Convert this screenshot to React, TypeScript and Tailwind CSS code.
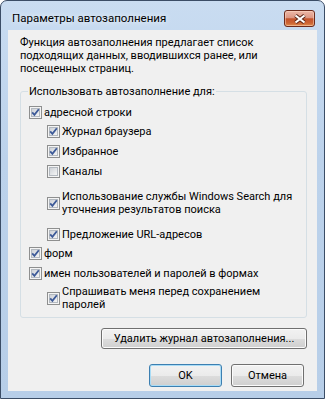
import { useId } from 'react';

function CheckBox({ checked }: { checked: boolean }) {
  const id = useId();
  return (
    <svg width="13" height="13" viewBox="0 0 13 13" className="shrink-0">
      <defs>
        <linearGradient id={`g${id}`} x1="0" y1="0" x2="1" y2="1">
          <stop offset="0" stopColor="#cbcfd5" />
          <stop offset="1" stopColor="#f7f7f7" />
        </linearGradient>
      </defs>
      <rect x="0.5" y="0.5" width="12" height="12" fill="#f4f4f4" stroke="#8e8f8f" />
      <rect x="2.5" y="2.5" width="8" height="8" fill={`url(#g${id})`} stroke="#b3b9c0" />
      {checked && (
        <path d="M3.2 6.4 L5.4 8.9 L9.8 3.2" fill="none" stroke="#3d5a98" strokeWidth="1.8" />
      )}
    </svg>
  );
}

function Option({ label, checked = true, indent = false, className = '' }: {
  label: React.ReactNode;
  checked?: boolean;
  indent?: boolean;
  className?: string;
}) {
  return (
    <div className={`flex items-center gap-[2px] ${indent ? 'ml-[18px]' : ''} ${className}`}>
      <CheckBox checked={checked} />
      <span className="leading-[13px] whitespace-nowrap">{label}</span>
    </div>
  );
}

function CloseButton() {
  return (
    <div className="mt-[9px] w-[31px] h-[17px] rounded-[3px] border border-[#6b2a1c] bg-[linear-gradient(180deg,#edb8a8_0%,#dc9784_45%,#c4532c_52%,#cc6434_80%,#e18d4e_100%)] shadow-[inset_0_0_0_1px_rgba(255,220,200,0.5)] flex items-center justify-center">
      <svg width="14" height="10" viewBox="0 0 14 10">
        <path d="M2.5 1.5 L11.5 8.5 M11.5 1.5 L2.5 8.5" stroke="#5b2618" strokeWidth="4" />
        <path d="M2.5 1.5 L11.5 8.5 M11.5 1.5 L2.5 8.5" stroke="#ffffff" strokeWidth="2.2" />
      </svg>
    </div>
  );
}

const btn =
  'h-[21px] rounded-[3px] border bg-[linear-gradient(180deg,#f2f2f2_0%,#ebebeb_50%,#dddddd_50%,#cfcfcf_100%)] leading-[13px] text-black';

export default function App() {
  return (
    <div className="w-[325px] h-[399px] font-['Roboto','Liberation_Sans',sans-serif] text-[11px] text-black">
      <div className="w-[325px] h-[399px] flex flex-col rounded-t-[7px] border border-[#3b4d66] bg-[linear-gradient(180deg,#c9dcf1_0%,#bcd2eb_40%,#b7cee8_100%)]">
        {/* Title bar */}
        <div className="h-[29px] shrink-0 flex justify-between pl-[11px] pr-[9px]">
          <span className="pt-[10px] leading-[14px] text-[11.5px] [text-shadow:0_0_6px_#ffffff]">Параметры автозаполнения</span>
          <CloseButton />
        </div>

        {/* Client area */}
        <div className="mx-[7px] mb-[7px] flex-1 bg-[#f0f0f0] flex flex-col">
          <p className="pl-[12px] pt-[6px] leading-[13px] whitespace-nowrap">
            Функция автозаполнения предлагает список<br />
            подходящих данных, вводившихся ранее, или<br />
            посещенных страниц.
          </p>

          <fieldset className="mt-[10px] ml-[12px] mr-[10px] border border-[#d5dfe5] rounded-[3px] pl-[8px] pb-[6px]">
            <legend className="-ml-[1px] px-[1px] leading-[13px]">Использовать автозаполнение для:</legend>
            <Option className="h-[17px] mt-[6px]" label="адресной строки" />
            <Option className="h-[17px] mt-[2px]" indent label="Журнал браузера" />
            <Option className="h-[17px] mt-[3px]" indent label="Избранное" />
            <Option className="h-[17px] mt-[3px]" indent checked={false} label="Каналы" />
            <Option
              className="h-[26px] mt-[10px]"
              indent
              label={<>Использование службы Windows Search для<br />уточнения результатов поиска</>}
            />
            <Option className="h-[17px] mt-[10px]" indent label="Предложение URL-адресов" />
            <Option className="h-[17px] mt-[2px]" label="форм" />
            <Option className="h-[17px] mt-[3px]" label="имен пользователей и паролей в формах" />
            <Option
              className="h-[26px] mt-[3px]"
              indent
              label={<>Спрашивать меня перед сохранением<br />паролей</>}
            />
          </fieldset>

          <div className="flex justify-end mr-[10px] mt-[10px]">
            <button className={`${btn} w-[206px] border-[#707070] shadow-[inset_0_0_0_1px_#fbfbfb]`}>
              Удалить журнал автозаполнения...
            </button>
          </div>

          <div className="flex justify-end gap-[9px] mr-[13px] mt-[15px]">
            <button className={`${btn} h-[23px] w-[73px] border-[#3c7fb1] shadow-[inset_0_0_0_1px_#a9dcf6]`}>OK</button>
            <button className={`${btn} h-[23px] w-[73px] border-[#707070] shadow-[inset_0_0_0_1px_#fbfbfb]`}>Отмена</button>
          </div>
        </div>
      </div>
    </div>
  );
}
